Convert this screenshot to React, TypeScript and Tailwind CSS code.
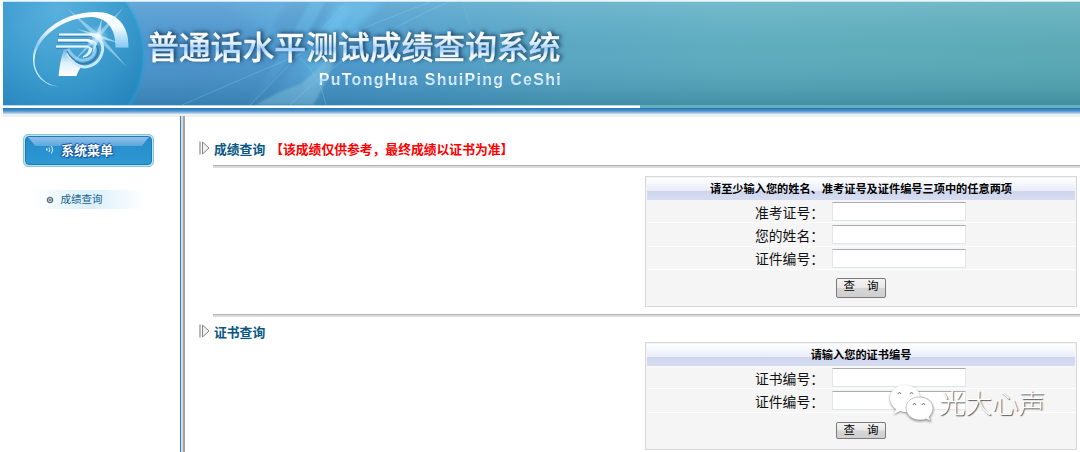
import React from "react";

type QueryFormProps = {
  title: string;
  fields: string[];
  className?: string;
  buttonClass: string;
};

// logo + light streaks behind the title
function BannerArt() {
  return (
    <svg className="absolute inset-0" width="1077" height="103" viewBox="3 2 1077 103">
      <defs>
        <linearGradient id="base" x1="0" x2="1" y1="0" y2="0">
          <stop offset="0" stopColor="#4596d0" />
          <stop offset="0.18" stopColor="#4a8fcb" />
          <stop offset="0.33" stopColor="#4b96cc" />
          <stop offset="0.52" stopColor="#58a5c1" />
          <stop offset="0.68" stopColor="#5dabbb" />
          <stop offset="1" stopColor="#5aa8b1" />
        </linearGradient>
        <linearGradient id="shade" x1="0" x2="0" y1="0" y2="1">
          <stop offset="0" stopColor="#a8e0f0" stopOpacity="0.3" />
          <stop offset="0.45" stopColor="#7cc0e0" stopOpacity="0.08" />
          <stop offset="1" stopColor="#14607f" stopOpacity="0.35" />
        </linearGradient>
        <radialGradient id="disc" gradientUnits="userSpaceOnUse" cx="58" cy="10" r="125">
          <stop offset="0" stopColor="#58b0dd" />
          <stop offset="0.5" stopColor="#3e9dcf" />
          <stop offset="1" stopColor="#2181b9" />
        </radialGradient>
        <linearGradient id="metal" x1="0" x2="0" y1="0" y2="1">
          <stop offset="0" stopColor="#ffffff" />
          <stop offset="0.5" stopColor="#e8f6ff" />
          <stop offset="0.8" stopColor="#a5d6f6" />
          <stop offset="1" stopColor="#f4fbff" />
        </linearGradient>
        <linearGradient id="swoosh" gradientUnits="userSpaceOnUse" x1="0" x2="0" y1="12" y2="88">
          <stop offset="0" stopColor="#ffffff" />
          <stop offset="0.2" stopColor="#f2faff" />
          <stop offset="0.45" stopColor="#88cbf3" />
          <stop offset="0.6" stopColor="#e5f6ff" />
          <stop offset="1" stopColor="#a6def8" />
        </linearGradient>
        <linearGradient id="leg" x1="0" x2="0" y1="0" y2="1">
          <stop offset="0" stopColor="#6ab0e2" />
          <stop offset="0.5" stopColor="#ddf0fc" />
          <stop offset="1" stopColor="#ffffff" />
        </linearGradient>
        <radialGradient id="glow">
          <stop offset="0" stopColor="#ffffff" stopOpacity="0.9" />
          <stop offset="0.4" stopColor="#d5f1ff" stopOpacity="0.3" />
          <stop offset="1" stopColor="#d5f1ff" stopOpacity="0" />
        </radialGradient>
        <radialGradient id="streak" gradientUnits="userSpaceOnUse" cx="360" cy="5" r="130">
          <stop offset="0" stopColor="#7ad8ff" stopOpacity="0.4" />
          <stop offset="1" stopColor="#7ad8ff" stopOpacity="0.03" />
        </radialGradient>
        <filter id="soft">
          <feGaussianBlur stdDeviation="3" />
        </filter>
        <filter id="softer">
          <feGaussianBlur stdDeviation="1" />
        </filter>
      </defs>
      <rect x="3" y="2" width="1077" height="103" fill="url(#base)" />
      <rect x="3" y="2" width="1077" height="103" fill="url(#shade)" />

      <g fill="url(#streak)">
        <path d="M350 2 L384 2 Q335 45 300 105 L268 105 Q300 50 350 2Z" filter="url(#soft)" />
        <path d="M310 2 L325 2 Q300 50 252 105 L246 105 Q285 50 310 2Z" filter="url(#softer)" />
        <path d="M336 2 L352 2 Q320 60 318 105 L302 105 Q308 50 336 2Z" filter="url(#soft)" />
        <path d="M212 2 L290 2 Q270 18 275 45 Q255 20 212 2Z" filter="url(#soft)" />
      </g>
      <path d="M256 105 Q274 93 300 84 Q325 66 342 40 Q330 78 313 105Z" fill="#a3d6e8" opacity="0.3" filter="url(#softer)" />
      <g fill="none" stroke="#82d5f7" strokeWidth="0.8" opacity="0.4">
        <path d="M448 2 Q350 45 290 105" />
        <path d="M430 2 Q330 40 182 105" />
        <path d="M346 2 Q305 50 250 105" />
        <path d="M300 58 Q320 75 326 105" />
        <path d="M462 2 L486 70" opacity="0.5" />
      </g>

      <circle cx="51" cy="57" r="92" fill="url(#disc)" />
      <circle cx="51" cy="57" r="92" fill="none" stroke="#24a0d5" strokeWidth="3" opacity="0.55" filter="url(#softer)" />

      <path
        d="M58.5 86.5 C45 86 33 76 33 59 C33 34 62 12 96 12 C117 12 129 25 128.5 47.5 L115.5 47.5 C116 30 108 18 92 17 C64 17 36 37 34.5 60 C34.5 75 46 85 58.5 86.5Z"
        fill="url(#swoosh)"
      />
      <path d="M64 49 L68 49 Q70 62 82 66 Q79 69 76.500 76 L58.500 76 Q60 60 64 49Z" fill="url(#leg)" />
      <path d="M90 34.500 Q104 38 102.500 51 Q99 66 84 67 Q73 66 67.500 53" fill="none" stroke="#c8e8fb" strokeWidth="3" />
      <path d="M90 39 Q101 46 97 56 Q91 65 80 63.500 Q72 60 67 51" fill="none" stroke="#347aa9" strokeWidth="1.500" />
      <path d="M88 41 Q98 46 94 54 Q90 61 80 60 Q73 58 68 49" fill="none" stroke="#8cc8ee" strokeWidth="3" />
      <path d="M88 46 Q92 51 83 57 Q91 56 92 48" fill="#e2f5ff" stroke="#e2f5ff" strokeWidth="1" />
      <g fill="url(#metal)">
        <path d="M59 33.500 H94 Q101 34 103 40 L98 38 Q95 35.500 91 35.500 H59Z" />
        <path d="M58 39 H88 Q96 40 97 45 L92 44 Q90 41.500 86 41.500 H58Z" />
        <path d="M56 45.500 H88 L89 48 H56Z" />
      </g>
      <path d="M58 36.500 H92 M57 42.500 H88 M56 48.500 H67" stroke="#3b83b4" strokeWidth="0.9" />

      <g fill="#e1f6ff">
        <path d="M67 8 L99 34 L127 67 L96 38Z" opacity="0.45" />
        <path d="M124 7 L100 37 L72 63 L97 34Z" opacity="0.45" />
        <path d="M102 18 L100 38 L92 55 L96 35Z" opacity="0.6" />
        <path d="M77 29 L98 34 L119 43 L98 38Z" opacity="0.6" />
      </g>
      <circle cx="98" cy="36" r="11" fill="url(#glow)" />
    </svg>
  );
}

function Header() {
  return (
    <header className="ml-[3px]">
      <div className="h-[2px] bg-gradient-to-b from-white to-[#b9dceb]" />
      <div className="relative h-[103px] overflow-hidden">
        <BannerArt />
        <div className="relative w-[559px] pt-[20px]">
          <h1 className="ml-[144px] h-[48px] whitespace-nowrap bg-[linear-gradient(to_bottom,#fff_25%,#e4f1ff_42%,#9fceff_56%,#e7f4ff_68%,#fff_80%)] bg-clip-text text-[32px] leading-[46px] font-medium tracking-[-0.2px] text-transparent drop-shadow-[2px_-1px_2px_#153b55] [-webkit-text-stroke:0.4px_transparent]">
            普通话水平测试成绩查询系统
          </h1>
          <p className="h-[20px] bg-[linear-gradient(to_bottom,#fff_30%,#b5dafb_55%,#f4faff_80%)] bg-clip-text text-right font-['Liberation_Sans',sans-serif] text-[16px] leading-[20px] font-bold tracking-[1.3px] whitespace-nowrap text-transparent">
            PuTongHua ShuiPing CeShi
          </p>
        </div>
      </div>
      <div className="flex h-[3px]">
        <div className="w-[637px] border-t border-[#b6d8e8] bg-white" />
        <div className="flex-1 bg-[#62b0be]" />
      </div>
      <div className="h-[6px] bg-gradient-to-b from-[#2375b3] via-[#4c94cb] to-[#c9e0f2]" />
      <div className="h-[3px] bg-[#eeeff1]" />
    </header>
  );
}

function Sidebar() {
  return (
    <aside className="w-[180px] shrink-0">
      <div className="mt-[17px] ml-[23px] flex h-[33px] w-[131px] rounded-[5px] border border-[#85c7d8] bg-[#bce5ef] p-px">
        <div className="relative flex flex-1 items-center rounded-[4px] border border-[#2379b4] bg-gradient-to-b from-[#278bcb] to-[#2c98d2] pb-[2px]">
          <div className="absolute inset-x-[2px] top-0 h-[9px] bg-gradient-to-b from-[#93bfeb] to-[#5aa7de] [clip-path:polygon(0_0,100%_0,94%_100%,6%_100%)]" />
          <svg className="relative ml-[19px]" width="10" height="10" viewBox="0 0 10 10" fill="none" stroke="#d9f1ff">
            <path d="M1 4.500 H2.500" strokeWidth="2" />
            <path d="M4 2.500 Q5.500 4.500 4 7" />
            <path d="M6.500 1 Q9 4.500 6.500 8.500" />
          </svg>
          <span className="relative ml-[6px] text-[13px] leading-[18px] font-bold text-white [text-shadow:1px_1px_1px_#0c4696,-1px_0_1px_#0c4696,0_-1px_1px_#0c4696]">
            系统菜单
          </span>
        </div>
      </div>
      <div className="mt-[23px] ml-[32px] flex h-[19px] w-[114px] items-center bg-gradient-to-r from-white via-[#d9effb] to-white pb-px">
        <svg className="mt-[2px] ml-[14px]" width="8" height="8" viewBox="0 0 8 8">
          <circle cx="4" cy="4" r="2.700" fill="#d5dce3" stroke="#59687a" strokeWidth="1.200" />
          <path d="M2.500 4 H5.500" stroke="#344a62" />
        </svg>
        <span className="ml-[6.500px] text-[10.5px] leading-[18px] text-[#14608b]">成绩查询</span>
      </div>
    </aside>
  );
}

function SectionTitle({ title, note }: { title: string; note?: string }) {
  return (
    <div className="flex h-[18px] items-center pl-[14px] text-[12.8px] leading-[18px] font-bold">
      <svg className="-mt-[2px]" width="11" height="14" viewBox="0 0 11 14" fill="none">
        <path d="M1 0.500 V13.500" stroke="#8b8b8b" strokeWidth="1.200" />
        <path d="M3.500 1 V13 L10 7Z" fill="#f1f1f1" stroke="#858585" />
      </svg>
      <span className="ml-[4px] text-[#095783]">{title}</span>
      {note && <span className="ml-[5px] text-[#ff0000]">{note}</span>}
    </div>
  );
}

function Divider() {
  return <div className="ml-[28px] h-[3px] border-t border-[#b5b5b5] bg-[#dcdcdc]" />;
}

const QueryForm: React.FC<QueryFormProps> = ({ title, fields, className = "", buttonClass }) => (
  <form className={`ml-[460px] flex w-[432px] flex-col border border-[#d8d8d8] bg-[#f5f5f5] p-px ${className}`}>
    <h2 className="h-[22px] bg-[linear-gradient(to_bottom,#fff,#e8ecf8_59%,#cfd6ec_60%,#d6dcf0)] text-center text-[11.2px] leading-[21px] font-bold text-black">
      {title}
    </h2>
    {fields.map((label) => (
      <label key={label} className="flex h-[23.300px] items-center border-b border-white pt-px">
        <span className="ml-[108px] w-[77px] text-[13.8px] leading-[22px] whitespace-nowrap text-[#111]">{label}：</span>
        <input
          type="text"
          className="h-[19px] w-[134px] border border-[#e1e5ee] border-t-[#a9aab0] bg-white"
        />
      </label>
    ))}
    <button
      type="button"
      className={`ml-[189px] flex w-[50px] justify-between rounded-[2px] border border-[#7b7b7b] bg-[linear-gradient(to_bottom,#f4f4f4,#e8e8e8_48%,#d6d6d6_52%,#cfcfcf)] px-[6.500px] text-[11.500px] leading-[13px] text-black ${buttonClass}`}
    >
      <span>查</span>
      <span>询</span>
    </button>
  </form>
);

function Watermark() {
  return (
    <div className="absolute top-[383px] left-[888px] flex items-center">
      <svg width="46" height="40" viewBox="0 0 46 40" fill="#fff" className="drop-shadow-[0_1px_1px_#888]">
        <path d="M17 2 C8 2 2 8 2 15 C2 20 5 24 8 26 L6 31 L12 28 Q17 30 22 28 C29 26 32 21 32 15 C32 7 25 2 17 2Z" />
        <path
          d="M31 14 C23 14 18 19 18 25 C18 32 24 37 32 37 Q36 37 38 36 L43 38 L41 34 Q45 30 45 25 C45 19 39 14 31 14Z"
          stroke="#aaa"
          strokeWidth="0.7"
        />
        <g fill="none" stroke="#888" strokeWidth="1.100">
          <path d="M10 11 Q11.500 8 13 11" />
          <path d="M22 11 Q23.500 8 25 11" />
          <path d="M25 22 Q26.500 19 28 22" />
          <path d="M34 22 Q35.500 19 37 22" />
        </g>
      </svg>
      <span className="-mt-[2px] ml-[5px] text-[26.500px] leading-[40px] font-light text-white [text-shadow:1px_1px_1px_#555]">
        光大心声
      </span>
    </div>
  );
}

export default function App() {
  return (
    <div className="relative h-[452px] w-[1080px] overflow-hidden bg-white font-['Noto_Sans_CJK_SC',sans-serif]">
      <Header />
      <div className="flex h-[335px]">
        <Sidebar />
        <div className="-mt-px flex w-[5px] shrink-0">
          <div className="w-px bg-[#2f80c8]" />
          <div className="w-[2px] bg-[#d9dadc]" />
          <div className="w-[2px] bg-[#a5a5a5]" />
        </div>
        <main className="min-w-0 flex-1 pt-[23px]">
          <SectionTitle title="成绩查询" note="【该成绩仅供参考，最终成绩以证书为准】" />
          <div className="h-[7px]" />
          <Divider />
          <QueryForm
            title="请至少输入您的姓名、准考证号及证件编号三项中的任意两项"
            fields={["准考证号", "您的姓名", "证件编号"]}
            className="mt-[8px] h-[131px]"
            buttonClass="mt-[8px] h-[20px]"
          />
          <div className="h-[7px]" />
          <Divider />
          <div className="h-[6px]" />
          <SectionTitle title="证书查询" />
          <QueryForm
            title="请输入您的证书编号"
            fields={["证书编号", "证件编号"]}
            className="mt-[1px] h-[108px]"
            buttonClass="mt-[9px] h-[17px]"
          />
        </main>
      </div>
      <Watermark />
    </div>
  );
}
